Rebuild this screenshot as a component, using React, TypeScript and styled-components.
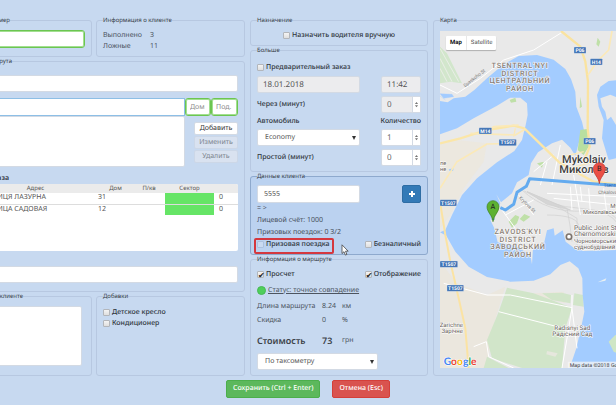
import React from "react";
import styled, { createGlobalStyle, css } from "styled-components";

const GlobalStyle = createGlobalStyle`
  *, *::before, *::after { box-sizing: border-box; }
  html, body { margin: 0; background: #c7d9f0; }
  body {
    color: #30363d;
    font: 7px/11px "Noto Sans", "Open Sans", sans-serif;
    text-rendering: geometricPrecision;
    overflow: hidden;
  }
  button, input, select, textarea { font: inherit; color: inherit; margin: 0; text-rendering: inherit; }
`;

const Page = styled.main`
  min-height: 100vh;
  padding-top: 16px;
  overflow: hidden;
`;

const Sheet = styled.div`
  display: grid;
  grid-template-columns: 305fr 178fr 243fr;
  gap: 5px;
  margin: 0 -60px;
`;

const Column = styled.div`
  display: flex;
  flex-direction: column;
  min-width: 0;
  > :last-child { flex: 1; }
`;

const Pair = styled.div`
  display: grid;
  grid-template-columns: 152fr 149fr;
  column-gap: 4px;
`;

const Panel = styled.fieldset<{ $active?: boolean; $top?: number; $bottom?: number }>`
  position: relative;
  min-width: 0;
  margin: 0;
  padding: ${(p) => p.$top ?? 5}px 6px ${(p) => p.$bottom ?? 5}px;
  border: 1px solid ${(p) => (p.$active ? "#8ea9cd" : "#b7c8e1")};
  border-radius: 3px;
  ${(p) =>
    p.$active &&
    css`
      background: #bbd2f0;
    `}
`;

const Title = styled.legend<{ $end?: number }>`
  padding: 0;
  font-size: 6px;
  line-height: 9px;
  color: #343b45;
  ${(p) => p.$end !== undefined && `margin-left: auto; margin-right: ${p.$end}px;`}
`;

const Stack = styled.div<{ $gap?: number; $top?: number }>`
  display: flex;
  flex-direction: column;
  gap: ${(p) => p.$gap ?? 0}px;
  padding-top: ${(p) => p.$top ?? 0}px;
`;

const Row = styled.div<{ $justify?: string }>`
  display: flex;
  align-items: center;
  justify-content: ${(p) => p.$justify ?? "space-between"};
  min-height: 11px;
`;

const Caption = styled.span`
  font-weight: 500;
  white-space: nowrap;
`;

const fieldLook = css`
  min-width: 0;
  border: 1px solid #d3dae4;
  border-radius: 2px;
  background: #fff;
  color: #555;
  outline: none;
  &:disabled { background: #ececee; opacity: 1; }
  &::placeholder { color: #8c8c8c; opacity: 1; }
`;

const TextBox = styled.input<{ $w?: number; $tone?: "green" | "blue"; $h?: number; $pad?: number }>`
  ${fieldLook}
  width: ${(p) => (p.$w ? `${p.$w}px` : "100%")};
  height: ${(p) => p.$h ?? 17}px;
  padding: 0 ${(p) => p.$pad ?? 6}px;
  ${(p) => p.$tone === "green" && "border: 1px solid #6cc551; box-shadow: inset 0 0 0 1px #a2df90; border-radius: 3px;"}
  ${(p) => p.$tone === "blue" && "border-color: #8dbfe6; border-radius: 0; flex: 1;"}
`;

const StampBox = styled(TextBox)`
  font-size: 8px;
  padding: 0 5px;
`;

const TextArea = styled.textarea<{ $h: number }>`
  ${fieldLook}
  display: block;
  width: 100%;
  height: ${(p) => p.$h}px;
  resize: none;
`;

const NoteWrap = styled.div`
  padding-right: 3px;
`;

const Facts = styled.dl<{ $label: number; $value?: number; $row: number }>`
  display: grid;
  grid-template-columns: ${(p) => p.$label}px ${(p) => (p.$value ? `${p.$value}px` : "")} 1fr;
  grid-auto-rows: ${(p) => p.$row}px;
  align-items: center;
  margin: 0;
  color: #4c545f;
  white-space: nowrap;
  dt, dd { margin: 0; }
`;

const AddressRow = styled.div`
  display: flex;
  height: 18px;
`;

const AddressBody = styled.div`
  display: grid;
  grid-template-columns: minmax(0, 1fr) 44px;
  column-gap: 9px;
`;

const ListButton = styled.button`
  height: 13px;
  padding: 0;
  border: 1px solid #d3dae4;
  border-radius: 2px;
  background: #fff;
  line-height: 11px;
  color: #333;
  &:disabled { background: #d9e2f0; color: #7d848e; border-color: #ccd7e7; }
`;

const TableTitle = styled.h2`
  margin: 0;
  padding-right: 229px;
  text-align: right;
  font-size: 7px;
  line-height: 11px;
  font-weight: 600;
`;

const TableBox = styled.div`
  height: 67px;
  background: #fff;
  border-radius: 2px;
  overflow: hidden;
`;

const StopsTable = styled.table`
  width: 100%;
  border-collapse: collapse;
  table-layout: fixed;
  color: #555;
  th {
    height: 9px;
    padding: 0;
    background: #ebebeb;
    font-size: 6px;
    line-height: 9px;
    font-weight: 400;
  }
  td { height: 11px; padding: 0; line-height: 10px; white-space: nowrap; }
  th:first-child { padding-left: 26px; }
  td:first-child { padding-left: 42px; }
  tbody tr:first-child td { border-bottom: 1px solid #ddd; }
  td:last-child { padding-left: 5px; }
`;

const SectorCell = styled.td`
  background: #66e566;
`;

const CheckLabel = styled.label`
  display: inline-flex;
  align-items: center;
  gap: 2px;
  height: 11px;
  font-weight: 500;
  white-space: nowrap;
`;

const Tick = styled.input`
  appearance: none;
  display: grid;
  place-items: center;
  width: 7px;
  height: 7px;
  border: 1px solid #b3b6bb;
  border-radius: 1px;
  background: linear-gradient(#f4f4f4, #dfdfdf);
  &:checked::after {
    content: "✔";
    color: #222;
    font: 8px/7px "DejaVu Sans", sans-serif;
  }
  &:disabled {
    border-color: #abc1df;
    background: #c9daf1;
  }
`;

const SelectWrap = styled.span<{ $w: number }>`
  display: grid;
  grid-template-columns: minmax(0, 1fr) 10px;
  align-items: center;
  width: ${(p) => p.$w}px;
  select { grid-area: 1 / 1 / 2 / 3; }
  svg { grid-area: 1 / 2; pointer-events: none; }
`;

const SelectBox = styled.select`
  ${fieldLook}
  appearance: none;
  width: 100%;
  height: 17px;
  padding: 0 7px;
`;

const SpinWrap = styled.span<{ $off?: boolean }>`
  display: flex;
  width: 40px;
  height: 17px;
  border: 1px solid #d3dae4;
  border-radius: 2px;
  background: ${(p) => (p.$off ? "#ececee" : "#fff")};
  input {
    appearance: textfield;
    flex: 1;
    min-width: 0;
    padding: 0 5px;
    border: 0;
    background: none;
    color: #666;
    font-size: 8px;
    outline: none;
  }
  input::-webkit-inner-spin-button { display: none; }
  svg { width: 8px; height: 100%; border-left: 1px solid #d3dae4; background: #fff; }
`;

const AddButton = styled.button`
  display: grid;
  place-items: center;
  width: 19px;
  height: 18px;
  padding: 0;
  border: 1px solid #2e6da4;
  border-radius: 2px;
  background: #337ab7;
`;

const Muted = styled.div`
  line-height: 12px;
  color: #48505b;
  white-space: nowrap;
`;

const Highlight = styled.div`
  position: absolute;
  left: 3px;
  bottom: 0;
  width: 80px;
  height: 16px;
  border: 2px solid #d4383f;
  border-radius: 2px;
  pointer-events: none;
`;

const Pointer = styled.svg`
  position: absolute;
  left: 90px;
  bottom: -2px;
  width: 8px;
  height: 12px;
`;

const StatusLink = styled.a`
  display: flex;
  align-items: center;
  gap: 2px;
  height: 12px;
  color: #4c545f;
  text-decoration: underline;
  &::before {
    content: "";
    width: 9px;
    height: 9px;
    border-radius: 50%;
    background: #4fcf5b;
    border: 1px solid #47b955;
  }
`;

const Total = styled.div`
  display: grid;
  grid-template-columns: 65px 20px 1fr;
  align-items: center;
  height: 26px;
  color: #4c545f;
  strong, b { font-size: 9px; font-weight: 600; color: #3c4249; }
`;

const MapFrame = styled.div`
  position: relative;
  overflow: hidden;
  height: 337px;
  > svg { display: block; width: 100%; height: 100%; }
`;

const MapSwitch = styled.div`
  position: absolute;
  top: 5px;
  left: 6px;
  display: flex;
  border-radius: 1px;
  background: #fff;
  box-shadow: 0 1px 1px rgba(0, 0, 0, 0.25);
`;

const MapMode = styled.button<{ $on?: boolean }>`
  height: 14px;
  padding: 0 4px;
  border: 0;
  background: none;
  font: ${(p) => (p.$on ? 600 : 400)} 6px/14px Roboto, sans-serif;
  color: ${(p) => (p.$on ? "#000" : "#565656")};
  & + & { border-left: 1px solid #e8e8e8; }
`;

const Actions = styled.footer`
  display: flex;
  justify-content: center;
  gap: 12px;
  padding-top: 4px;
`;

const Action = styled.button<{ $danger?: boolean }>`
  height: 18px;
  padding: 0 6px;
  border: 1px solid ${(p) => (p.$danger ? "#d43f3a" : "#4cae4c")};
  border-radius: 2px;
  background: ${(p) => (p.$danger ? "#d9534f" : "#5cb85c")};
  color: #fff;
  font-weight: 500;
  line-height: 16px;
  white-space: nowrap;
`;

function Check({ label, checked, off }: { label: string; checked?: boolean; off?: boolean }) {
  return (
    <CheckLabel>
      <Tick type="checkbox" defaultChecked={checked} disabled={off} />
      {label}
    </CheckLabel>
  );
}

function Spinner({ label, value, off }: { label: string; value: number; off?: boolean }) {
  return (
    <SpinWrap $off={off}>
      <input type="number" aria-label={label} defaultValue={value} disabled={off} />
      <svg viewBox="0 0 8 15" aria-hidden="true">
        <path d="M2.2 6.8 4 4.6l1.8 2.2zM2.2 8.4 4 10.6l1.8-2.2z" fill="#777" />
      </svg>
    </SpinWrap>
  );
}

function Choice({ label, value, w }: { label: string; value: string; w: number }) {
  return (
    <SelectWrap $w={w}>
      <SelectBox aria-label={label} defaultValue={value}>
        <option>{value}</option>
      </SelectBox>
      <svg viewBox="0 0 10 6" width="10" height="6" aria-hidden="true">
        <path d="M2 1h4L4 5z" fill="#333" />
      </svg>
    </SelectWrap>
  );
}

function Shield({ x, y, w, text }: { x: number; y: number; w: number; text: string }) {
  return (
    <g>
      <rect x={x} y={y} width={w} height="19" rx="2" fill="#3f72b5" stroke="#dfe8f3" strokeWidth="1" />
      <text x={x + w / 2} y={y + 15} textAnchor="middle" fontSize="15" fontWeight="700" fill="#fff">
        {text}
      </text>
    </g>
  );
}

function Label({ x, y, size, lines, step, color = "#6b6460", anchor = "middle", weight = 500, track = 0 }: {
  x: number; y: number; size: number; lines: string[]; step: number;
  color?: string; anchor?: "start" | "middle" | "end"; weight?: number; track?: number;
}) {
  return (
    <g fontSize={size} fontWeight={weight} fill={color} stroke="#fff" strokeOpacity="0.8" strokeWidth="4"
      paintOrder="stroke" strokeLinejoin="round" textAnchor={anchor} letterSpacing={track}>
      {lines.map((t, i) => (
        <text key={t} x={x} y={y + i * step}>{t}</text>
      ))}
    </g>
  );
}

function Marker({ x, y, fill, edge, letter }: { x: number; y: number; fill: string; edge: string; letter: string }) {
  return (
    <g transform={`translate(${x} ${y})`}>
      <path d="M0 0C-2-20-18-28-18-45a18 18 0 0 1 36 0C18-28 2-20 0 0z" fill={fill} stroke={edge} strokeWidth="2" />
      <text y="-37" textAnchor="middle" fontSize="22" fill="#222">{letter}</text>
    </g>
  );
}

function CityMap() {
  return (
    <svg viewBox="9 8 1200 1011" preserveAspectRatio="xMinYMin slice" fontFamily="Roboto, sans-serif" role="img" aria-label="Mykolaiv">
      <rect x="9" y="8" width="1200" height="1011" fill="#e9e9e9" />
      {/* parks and fields */}
      <path d="M9 345 60 335 150 345 140 400 80 480 40 560 9 600z" fill="#ece8df" />
      <path d="M9 700 60 765 150 800 205 775 165 905 150 1019H9z" fill="#ebe7de" />
      <path d="M290 795 380 790 385 825 330 812z" fill="#ebe7de" />
      <path d="M9 55 30 75 75 165 40 160 9 165z" fill="#d2e6cc" />
      <path d="M9 60 65 160M9 90 45 160M9 120 30 160" stroke="#e9eee6" strokeWidth="3" />
      <path d="M210 778 290 795 405 838 385 900 375 1019H255L165 990 150 935 185 850z" fill="#d1e5c9" />
      <path d="M150 985 215 1019H140z" fill="#d1e5c9" />
      <path d="M315 795 375 793 402 800 400 825 345 815zM412 795 438 800 440 835 408 830z" fill="#d1e5c9" />
      <path d="M330 968 362 975 355 985 328 978z" fill="#e6e7dd" />
      {/* water */}
      <path d="M9 218 32 222 50 210 85 205 112 185 150 150 200 108 245 83 300 80 350 94 385 122 402 152 415 190 418 235 435 280 442 310 425 345 415 382 400 358 375 334 345 345 303 372 282 405 275 440 240 462 225 495 192 522 178 498 190 525 182 545 165 555 160 575 172 600 182 642 235 652 280 680 285 708 288 660 320 650 330 606 350 600 353 622 377 606 386 640 412 660 440 668 540 665H1209V1019H398L418 960 432 900 442 850 437 800 436 750 424 720 398 699 370 710 340 738 290 757 220 760 150 746 95 715 55 670 28 622 9 612 25 605 45 560 75 500 120 450 180 402 232 368 255 335 266 290 272 260 270 225 250 208 220 208 180 232 110 270 60 300 9 318z" fill="#a3ccff" />
      <path d="M800 120 560 153 515 158 490 175 480 200 485 235 500 275 495 330 515 395 545 388 800 390z" fill="#a3ccff" />
      <path d="M490 210 520 199 560 215V300L538 292 522 265 510 275 505 250 495 235z" fill="#e9e9e9" />
      <path d="M9 196 45 198 50 205 20 210zM9 203 25 215" fill="#a3ccff" stroke="#a3ccff" />
      <path d="M482 762 508 750 505 757z" fill="#e9f0f2" />
      <path d="M540 915 515 940 530 970 560 985V905z" fill="#cfe6c5" />
      <path d="M430 305 450 302 458 350 440 380 422 365z" fill="#b8dfa0" />
      <path d="M218 215 235 208 238 220 222 223zM215 580 235 560 247 565 240 585 225 598zM248 572 262 557 280 565 260 580zM430 205 435 235 428 240zM482 28 490 40 485 55 478 48zM300 405 320 400 315 418z" fill="#bfe0a8" />
      <path d="M35 423 50 420 48 428 38 428z" fill="#a3ccff" />
      {/* rail yard */}
      <g fill="none" stroke="#cfcfcf" strokeWidth="2">
        <path d="M255 485Q330 555 440 548T545 600M262 488Q340 535 430 540T545 590M270 490 390 540Q400 590 405 640M300 510 370 540 420 570V650M330 560Q430 560 425 600" />
        <path d="M270 490 400 545 330 528z" fill="#d5d5d5" />
      </g>
      {/* small streets */}
      <g fill="none" stroke="#fff" strokeWidth="3">
        <path d="M9 170 60 195 130 150 200 95 290 65 375 12M245 500 290 560M205 560 290 515M235 600 195 545M290 430 350 380M310 470 330 400M345 470 370 350M400 475 405 545M430 475 435 520M455 480 460 550M500 480 510 560M350 510 540 530M330 495 545 505M410 440 430 560M540 240 545 300" />
        <path d="M20 765 150 800 220 800 405 838 395 900 375 1019M185 850 400 905M110 955 148 940 155 985 230 1019M405 800 405 840 420 960" />
      </g>
      {/* main roads */}
      <g fill="none" strokeLinejoin="round">
        <path d="M9 345 70 330 150 305 230 292 262 300 370 405 470 460 545 468" stroke="#fbe6a8" strokeWidth="7" />
        <path d="M372 8 430 55 445 100 453 160 452 300 458 355 440 400" stroke="#fae3a0" strokeWidth="7" />
        <path d="M525 8 515 65 480 100 453 140M100 315 235 320 265 302M9 480 60 400 150 347 240 345M150 310 170 295 245 290" stroke="#fbe9b8" strokeWidth="5" />
        <path d="M9 520 25 620 40 700 65 810 85 900 95 1019" stroke="#fbe3a3" strokeWidth="6" />
        <path d="M230 325 235 300M440 370 380 385M400 420 470 400" stroke="#fbe9b8" strokeWidth="4" />
      </g>
      <path d="M190 538 205 545 230 528 240 492 268 474 278 451 487 468" fill="none" stroke="#64abef" strokeWidth="9" strokeLinejoin="round" />
      <path d="M487 468 600 474" stroke="#64abef" strokeWidth="9" />
      <Shield x={411} y={56} w={36} text="P06" />
      <Shield x={460} y={91} w={36} text="H14" />
      <Shield x={126} y={298} w={38} text="M14" />
      <Shield x={186} y={333} w={52} text="T1507" />
      <Shield x={440} y={329} w={36} text="P06" />
      <Shield x={9} y={514} w={50} text="T1507" />
      <Shield x={9} y={698} w={53} text="T1507" />
      <Shield x={30} y={770} w={50} text="T1507" />
      <Label x={249} y={119} size={22} step={23} track={2} color="#8a8076" lines={["TSENTRAL'NYI", "DISTRICT", "ЦЕНТРАЛЬНИЙ", "РАЙОН"]} />
      <Label x={243} y={617} size={22} step={23} track={2} color="#8a8076" lines={["ZAVODS'KYI", "DISTRICT", "ЗАВОДСЬКИЙ", "РАЙОН"]} />
      <Label x={441} y={404} size={33} step={31} color="#3f3f3f" lines={["Mykolaiv", "Миколаїв"]} />
      <Label x={411} y={604} size={20} step={20} anchor="start" weight={400} lines={["Public Joint Stock", "Chernomorskiy"]} />
      <Label x={411} y={645} size={18} step={18} anchor="start" weight={400} lines={["Чорноморський", "суднобудівний"]} />
      <Label x={520} y={539} size={18} step={20} anchor="start" weight={400} lines={["Mykolaiv"]} />
      <Label x={438} y={558} size={17} step={20} anchor="start" weight={400} lines={["Миколаївський"]} />
      <Label x={406} y={905} size={19} step={18} lines={["Radisnyi Sad", "Радісний Сад"]} weight={400} />
      <Label x={78} y={895} size={18} step={19} anchor="end" weight={400} lines={["Zarichne", "Зарічне"]} />
      <Label x={28} y={410} size={17} step={18} anchor="end" weight={400} lines={["Vesniane", "Весняне"]} />
      <g fontSize="14" fill="#777">
        <text transform="translate(84 177) rotate(-38)">Spaskoho St</text>
        <text transform="translate(245 510) rotate(44)">Krylova St</text>
        <text x="484" y="498">Chkalova</text>
        <text x="500" y="476" fill="#2b61a8">Tsentralnyi</text>
      </g>
      <circle cx="396" cy="625" r="8" fill="#fff" stroke="#7d746d" strokeWidth="5" />
      <path d="M168 575V545" stroke="#4c8fd6" strokeWidth="8" />
      <Marker x={168} y={580} fill="#5db132" edge="#3c7d1d" letter="A" />
      <Marker x={487} y={466} fill="#ea4f46" edge="#b8332c" letter="B" />
      <g fontFamily="Lato, sans-serif" fontSize="31" fontWeight="700" stroke="#fff" strokeWidth="3" paintOrder="stroke">
        <text x="20" y="1010">
          <tspan fill="#4285f4">G</tspan><tspan fill="#ea4335">o</tspan><tspan fill="#fbbc05">o</tspan><tspan fill="#4285f4">g</tspan><tspan fill="#34a853">l</tspan><tspan fill="#ea4335">e</tspan>
        </text>
      </g>
      <rect x="392" y="1000" width="820" height="19" fill="#f5f5f5" fillOpacity="0.75" />
      <text x="398" y="1015" fontSize="16" fill="#444">Map data ©2018 Google</text>
    </svg>
  );
}

export default function App() {
  return (
    <Page>
      <GlobalStyle />
      <Sheet>
        <Column>
          <Pair>
            <Panel $bottom={4}>
              <Title $end={75}>Номер</Title>
              <TextBox aria-label="Номер" $tone="green" $h={18} />
            </Panel>
            <Panel $bottom={4}>
              <Title>Информация о клиенте</Title>
              <Facts $label={47} $row={11}>
                <dt>Выполнено</dt><dd>3</dd>
                <dt>Ложные</dt><dd>11</dd>
              </Facts>
            </Panel>
          </Pair>
          <Panel $bottom={8}>
            <Title $end={226}>Точки маршрута</Title>
            <Stack $gap={6} $top={4}>
              <TextBox aria-label="Город" />
              <div>
                <AddressRow>
                  <TextBox aria-label="Адрес" $tone="blue" $h={18} />
                  <TextBox aria-label="Дом" placeholder="Дом" $tone="green" $w={26} $h={18} $pad={4} />
                  <TextBox aria-label="Подъезд" placeholder="Под." $tone="green" $w={27} $h={18} $pad={4} />
                </AddressRow>
                <AddressBody>
                  <TextArea aria-label="Найденные адреса" $h={51} />
                  <Stack $gap={1} $top={6}>
                    <ListButton>Добавить</ListButton>
                    <ListButton disabled>Изменить</ListButton>
                    <ListButton disabled>Удалить</ListButton>
                  </Stack>
                </AddressBody>
              </div>
              <div>
                <TableTitle>Точки заказа</TableTitle>
                <TableBox>
                  <StopsTable>
                    <colgroup>
                      <col />
                      <col width="35" />
                      <col width="32" />
                      <col width="49" />
                      <col width="24" />
                    </colgroup>
                    <thead>
                      <tr><th>Адрес</th><th>Дом</th><th>П/кв</th><th>Сектор</th><th /></tr>
                    </thead>
                    <tbody>
                      <tr><td>УЛИЦЯ ЛАЗУРНА</td><td>31</td><td /><SectorCell /><td>0</td></tr>
                      <tr><td>УЛИЦА САДОВАЯ</td><td>12</td><td /><SectorCell /><td>0</td></tr>
                    </tbody>
                  </StopsTable>
                </TableBox>
              </div>
              <Stack $top={9}>
                <TextBox aria-label="Комментарий" />
              </Stack>
            </Stack>
          </Panel>
          <Pair>
            <Panel>
              <Title $end={62}>Заметки о клиенте</Title>
              <NoteWrap><TextArea aria-label="Заметки о клиенте" $h={60} /></NoteWrap>
            </Panel>
            <Panel>
              <Title>Добавки</Title>
              <Stack $top={1}>
                <Check label="Детское кресло" />
                <Check label="Кондиционер" />
              </Stack>
            </Panel>
          </Pair>
        </Column>

        <Column>
          <Panel $bottom={4}>
            <Title>Назначение</Title>
            <Row $justify="center"><Check label="Назначить водителя вручную" /></Row>
          </Panel>
          <Panel>
            <Title>Больше</Title>
            <Stack $gap={3} $top={2}>
              <Check label="Предварительный заказ" />
              <Row>
                <StampBox aria-label="Дата" defaultValue="18.01.2018" disabled $w={103} />
                <StampBox aria-label="Время" defaultValue="11:42" disabled $w={40} />
              </Row>
              <Row><Caption>Через (минут)</Caption><Spinner label="Через (минут)" value={0} off /></Row>
              <Stack $gap={2}>
                <Row><Caption>Автомобиль</Caption><Caption>Количество</Caption></Row>
                <Row><Choice label="Автомобиль" value="Economy" w={103} /><Spinner label="Количество" value={1} /></Row>
              </Stack>
              <Row><Caption>Простой (минут)</Caption><Spinner label="Простой (минут)" value={0} /></Row>
            </Stack>
          </Panel>
          <Panel $active $top={4} $bottom={4}>
            <Title>Данные клиента</Title>
            <Row>
              <TextBox aria-label="Код клиента" defaultValue="5555" $w={103} $h={18} />
              <AddButton aria-label="Добавить клиента">
                <svg width="8" height="8" viewBox="0 0 8 8"><path d="M4 1v6M1 4h6" stroke="#fff" strokeWidth="2" /></svg>
              </AddButton>
            </Row>
            <Muted>= &gt;</Muted>
            <Muted>Лицевой счёт: 1000</Muted>
            <Muted>Призовых поездок: 0 3/2</Muted>
            <Row><Check label="Призовая поездка" off /><Check label="Безналичный" /></Row>
            <Highlight />
            <Pointer viewBox="0 0 8 12" aria-hidden="true">
              <path d="M1 .8v8.8l2-1.9 1.4 3.4 1.5-.7-1.4-3.2h2.7z" fill="#fff" stroke="#444" strokeWidth=".8" />
            </Pointer>
          </Panel>
          <Panel>
            <Title>Информация о маршруте</Title>
            <Row><Check label="Просчет" checked /><Check label="Отображение" checked /></Row>
            <Stack $top={4}><StatusLink href="#status">Статус: точное совпадение</StatusLink></Stack>
            <Stack $top={3}>
              <Facts $label={65} $value={20} $row={14}>
                <dt>Длина маршрута</dt><dd>8.24</dd><dd>км</dd>
                <dt>Скидка</dt><dd>0</dd><dd>%</dd>
              </Facts>
              <Total><strong>Стоимость</strong><b>73</b><span>грн</span></Total>
            </Stack>
            <Choice label="Тариф" value="По таксометру" w={121} />
          </Panel>
        </Column>

        <Column>
          <Panel $top={6} $bottom={7}>
            <Title>Карта</Title>
            <MapFrame>
              <CityMap />
              <MapSwitch>
                <MapMode $on>Map</MapMode>
                <MapMode>Satellite</MapMode>
              </MapSwitch>
            </MapFrame>
          </Panel>
        </Column>
      </Sheet>
      <Actions>
        <Action>Сохранить (Ctrl + Enter)</Action>
        <Action $danger>Отмена (Esc)</Action>
      </Actions>
    </Page>
  );
}
